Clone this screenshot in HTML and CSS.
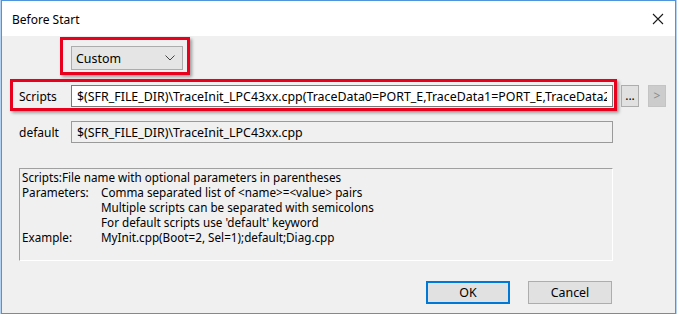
FILE: index.html
```html
<!DOCTYPE html>
<html lang="en">
<head>
    <meta charset="UTF-8">
    <title>Before Start</title>
    <link rel="stylesheet" href="styles.css">
</head>
<body>
    <div class="window">
        <div class="titlebar">
            <span class="title">Before Start</span>
            <svg class="close" width="12" height="12" viewBox="0 0 12 12">
                <path d="M1 1 L11 11 M11 1 L1 11" stroke="#1a1a1a" stroke-width="1.1" fill="none"/>
            </svg>
        </div>

        <div class="content">
            <div class="mark mark-combo">
                <div class="combo">
                    <span>Custom</span>
                    <svg width="10" height="6" viewBox="0 0 10 6">
                        <path d="M0.5 0.5 L5 5 L9.5 0.5" stroke="#444" stroke-width="1" fill="none"/>
                    </svg>
                </div>
            </div>

            <div class="row-scripts">
                <div class="mark mark-scripts">
                    <label class="label">Scripts</label>
                    <input class="field" type="text" value="$(SFR_FILE_DIR)\TraceInit_LPC43xx.cpp(TraceData0=PORT_E,TraceData1=PORT_E,TraceData2=PORT_E,TraceData3=PORT_E)">
                </div>
                <button class="small-btn">...</button>
                <button class="small-btn disabled">&gt;</button>
            </div>

            <div class="row-default">
                <label class="label">default</label>
                <input class="field readonly" type="text" value="$(SFR_FILE_DIR)\TraceInit_LPC43xx.cpp" readonly>
            </div>

            <div class="help">
                <div class="help-line">Scripts:File name with optional parameters in parentheses</div>
                <div class="help-line"><span class="help-key">Parameters:</span>Comma separated list of &lt;name&gt;=&lt;value&gt; pairs</div>
                <div class="help-line"><span class="help-key"></span>Multiple scripts can be separated with semicolons</div>
                <div class="help-line"><span class="help-key"></span>For default scripts use 'default' keyword</div>
                <div class="help-line"><span class="help-key">Example:</span>MyInit.cpp(Boot=2, Sel=1);default;Diag.cpp</div>
            </div>

            <div class="actions">
                <button class="btn btn-default">OK</button>
                <button class="btn">Cancel</button>
            </div>
        </div>
    </div>
</body>
</html>
```

FILE: styles.css
```css
body {
    margin: 0;
    background-color: #ffffff;
    font-family: 'Noto Sans', 'DejaVu Sans', sans-serif;
    font-size: 12px;
    color: #000;
}

.window {
    margin-left: 1px;
    width: 673px;
    height: 312px;
    border: 1px solid #4f95db;
    box-shadow: 0 0 0 1px rgba(120, 175, 230, 0.55);
    background-color: #f0f0f0;
}

.titlebar {
    height: 35px;
    background-color: #ffffff;
    display: flex;
    align-items: center;
    justify-content: space-between;
    padding: 0 11px 0 10px;
}

.title {
    font-size: 12px;
    margin-top: 1px;
}

.close {
    margin-top: 1px;
}

.content {
    display: flex;
    flex-direction: column;
    align-items: flex-start;
}

.mark {
    border: 3px solid #e8001c;
    box-shadow: 2px 2px 3px rgba(0, 0, 0, 0.35);
    box-sizing: border-box;
}

.mark-combo {
    margin: 1px 0 0 58px;
    width: 130px;
    height: 38px;
    padding: 6px 0 0 8px;
}

.combo {
    width: 112px;
    height: 24px;
    box-sizing: border-box;
    background-color: #e5e5e5;
    border: 1px solid #acacac;
    display: flex;
    align-items: center;
    justify-content: space-between;
    padding: 0 7px 0 4px;
    font-size: 12.4px;
}

.row-scripts {
    display: flex;
    align-items: flex-start;
    margin: 4px 0 0 8px;
}

.mark-scripts {
    width: 607px;
    height: 32px;
    display: flex;
    align-items: center;
    padding: 2px 0 0 6px;
}

.label {
    width: 52px;
    flex-shrink: 0;
    font-size: 12px;
}

.field {
    width: 542px;
    height: 22px;
    box-sizing: border-box;
    border: 1px solid #7a7a7a;
    background-color: #ffffff;
    padding: 0 5px;
    font-family: inherit;
    font-size: 12.4px;
    color: #000;
    outline: none;
}

.field.readonly {
    background-color: #f0f0f0;
    border-color: #9a9a9a;
}

.small-btn {
    width: 18px;
    height: 22px;
    margin: 6px 0 0 4px;
    padding: 0;
    border: 1px solid #adadad;
    background-color: #e1e1e1;
    font-family: inherit;
    font-size: 12px;
    line-height: 18px;
    color: #000;
}

.small-btn.disabled {
    margin-left: 9px;
    background-color: #cccccc;
    border-color: #c4c4c4;
    color: #8a8a8a;
}

.row-default {
    display: flex;
    align-items: center;
    margin: 10px 0 0 17px;
}

.help {
    margin: 25px 0 0 17px;
    width: 594px;
    height: 93px;
    box-sizing: border-box;
    border-top: 1px solid #a0a0a0;
    border-left: 1px solid #a0a0a0;
    border-right: 1px solid #ffffff;
    border-bottom: 1px solid #ffffff;
    padding: 1px 2px;
    font-size: 11.7px;
    line-height: 15px;
}

.help-key {
    display: inline-block;
    width: 79px;
}

.actions {
    align-self: flex-end;
    display: flex;
    gap: 18px;
    margin: 20px 63px 0 0;
}

.btn {
    width: 84px;
    height: 23px;
    box-sizing: border-box;
    border: 1px solid #adadad;
    background-color: #e1e1e1;
    font-family: inherit;
    font-size: 12.4px;
    color: #000;
    padding: 0;
}

.btn-default {
    border: 2px solid #0078d7;
}
```
